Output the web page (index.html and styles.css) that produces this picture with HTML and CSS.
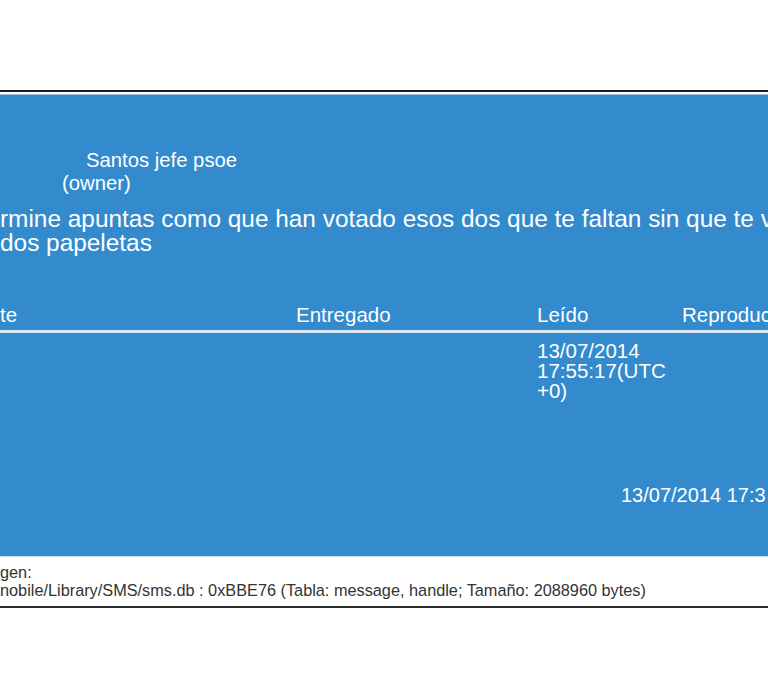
FILE: index.html
```html
<!DOCTYPE html>
<html lang="es">
<head>
<meta charset="utf-8">
<title>Mensaje</title>
<link rel="stylesheet" href="styles.css">
</head>
<body>
  <div class="frame">
    <div class="panel">
      <div class="owner">
        <div class="owner-name">Santos jefe psoe</div>
        <div class="owner-role">(owner)</div>
      </div>
      <div class="message">rmine apuntas como que han votado esos dos que te faltan sin que te v<br>dos papeletas</div>
      <div class="table">
        <div class="thead">
          <div class="cell">te</div>
          <div class="cell">Entregado</div>
          <div class="cell">Leído</div>
          <div class="cell">Reproduc</div>
        </div>
        <div class="trow">
          <div class="cell"></div>
          <div class="cell"></div>
          <div class="cell">13/07/2014<br>17:55:17(UTC<br>+0)</div>
          <div class="cell"></div>
        </div>
      </div>
      <div class="stamp">13/07/2014 17:3</div>
    </div>
    <div class="source">
      <div class="source-label">gen:</div>
      <div class="source-path">nobile/Library/SMS/sms.db : 0xBBE76 (Tabla: message, handle; Tamaño: 2088960 bytes)</div>
    </div>
  </div>
</body>
</html>
```

FILE: styles.css
```css
html, body {
  margin: 0;
  padding: 0;
}

body {
  width: 768px;
  height: 686px;
  overflow: hidden;
  background: #ffffff;
  font-family: "Liberation Sans", Arial, sans-serif;
}

.frame {
  margin-top: 90px;
  border-top: 2px solid #1e1e1e;
  border-bottom: 2px solid #2a2a2a;
  padding-top: 2px;
}

.panel {
  background: #338acd;
  border-top: 1px solid #9fc8ea;
  color: #ffffff;
  padding: 54px 0 49px;
  white-space: nowrap;
  overflow: hidden;
}

.owner {
  font-size: 20.3px;
  line-height: 23px;
}

.owner-name {
  padding-left: 86px;
}

.owner-role {
  padding-left: 62px;
}

.message {
  margin-top: 12px;
  font-size: 24.4px;
  line-height: 24px;
}

.table {
  margin-top: 48px;
}

.thead,
.trow {
  display: grid;
  grid-template-columns: 296px 241px 145px 1fr;
  font-size: 20.5px;
}

.thead {
  line-height: 24px;
  padding-bottom: 3px;
  border-bottom: 3px solid #d8e9f7;
}

.trow {
  padding-top: 8px;
  line-height: 20px;
}

.stamp {
  margin-top: 82px;
  padding-left: 621px;
  font-size: 20px;
  line-height: 24px;
}

.source {
  border-top: 1px solid #c5def2;
  padding: 6px 0 7px;
  font-size: 16.3px;
  line-height: 18px;
  color: #333333;
  white-space: nowrap;
  overflow: hidden;
}
```
